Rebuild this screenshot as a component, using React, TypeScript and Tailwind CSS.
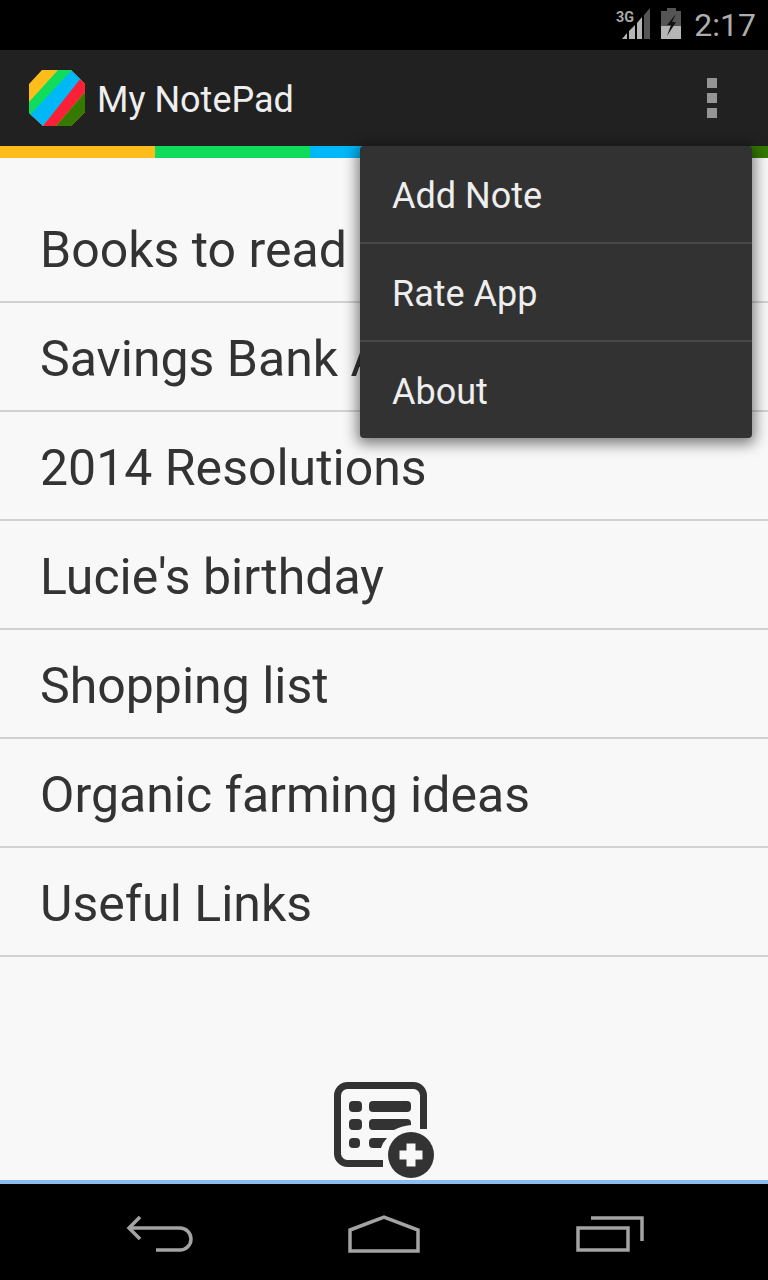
const notes = ["Books to read", "Savings Bank Account", "2014 Resolutions", "Lucie's birthday", "Shopping list", "Organic farming ideas", "Useful Links"];

function Logo() {
  return (
    <svg width="56" height="56" viewBox="0 0 56 56">
      <defs>
        <clipPath id="octa"><polygon points="13,0 42,0 56,14 56,42 42,56 14,56 0,43 0,14" /></clipPath>
      </defs>
      <g clipPath="url(#octa)">
        <rect width="56" height="56" fill="#fdbd1b" />
        <polygon points="29,0 43,0 4,48 0,43 0,32" fill="#10dc5c" />
        <polygon points="43,0 56,0 56,8 14,56 0,56 0,46" fill="#00b8f8" />
        <polygon points="52,8 56,12 56,22 27,56 14,56" fill="#fb2037" />
        <polygon points="56,22 56,56 27,56" fill="#347a00" />
      </g>
    </svg>
  );
}

function AddListIcon() {
  return (
    <svg width="100" height="96" viewBox="0 0 100 96">
      <path d="M49 81.5H13.5a10 10 0 0 1-10-10v-58a10 10 0 0 1 10-10h66a10 10 0 0 1 10 10V47" fill="none" stroke="#333" strokeWidth="7" />
      <rect x="15" y="19" width="13" height="11" rx="4" fill="#333" />
      <rect x="15" y="37" width="13" height="11" rx="4" fill="#333" />
      <rect x="15" y="56" width="11" height="10" rx="4" fill="#333" />
      <rect x="35" y="19" width="42" height="11" rx="4" fill="#333" />
      <path d="M39 37h34a4 4 0 0 1 4 4v2q-10 1-17 5H39a4 4 0 0 1-4-4v-3a4 4 0 0 1 4-4z" fill="#333" />
      <path d="M39 56h14q-4 4-6 10h-8a4 4 0 0 1-4-4v-2a4 4 0 0 1 4-4z" fill="#333" />
      <circle cx="77" cy="73" r="23" fill="#333" />
      <path d="M72.5 61.5h9v7h7v9h-7v7h-9v-7h-7v-9h7z" fill="#f8f8f8" />
    </svg>
  );
}

export default function App() {
  return (
    <div className="relative flex h-[1280px] w-[768px] flex-col overflow-hidden bg-[#f8f8f8] font-['Roboto',sans-serif]">
      <div className="flex h-[50px] items-start justify-end bg-black pr-[12px]">
        <svg width="34" height="32" viewBox="0 0 34 32" className="mt-[8px]">
          <polygon points="34,0 34,31 28,31 28,7" fill="#555" />
          <polygon points="26,9 26,31 21,31 21,15" fill="#b5b5b5" />
          <polygon points="19,17 19,31 13,31 13,23" fill="#b5b5b5" />
          <polygon points="11,25 11,31 6,31" fill="#b5b5b5" />
          <text x="0" y="14" fontSize="15" fontWeight="700" fill="#aaa" fontFamily="Roboto" textLength="18" lengthAdjust="spacingAndGlyphs">3G</text>
        </svg>
        <svg width="20" height="32" viewBox="0 0 20 32" className="ml-[11px] mt-[8px]">
          <rect x="6" y="0" width="9" height="3" fill="#555" />
          <rect x="0" y="3" width="20" height="15" fill="#555" />
          <rect x="0" y="18" width="20" height="13" fill="#b5b5b5" />
          <polygon points="15,6 6,17 10,17 6,28 15,14 11,14" fill="#111" />
        </svg>
        <span className="ml-[13px] mt-[6px] text-[32px] leading-[38px] text-[#aeaeae]">2:17</span>
      </div>

      <div className="flex h-[96px] items-center bg-[#212121] pl-[29px] pr-[51px]">
        <Logo />
        <span className="ml-[12px] pt-[4px] text-[36px] text-[#eeeeee]">My NotePad</span>
        <div className="ml-auto flex flex-col gap-[5px]">
          <div className="size-[10px] bg-[#959595]" />
          <div className="size-[10px] bg-[#959595]" />
          <div className="size-[10px] bg-[#959595]" />
        </div>
      </div>

      <div className="flex h-[12px]">
        <div className="w-[155px] bg-[#fdbd1b]" />
        <div className="w-[155px] bg-[#10dc5c]" />
        <div className="w-[153px] bg-[#00b8f8]" />
        <div className="w-[154px] bg-[#fb2037]" />
        <div className="flex-1 bg-[#347a00]" />
      </div>

      <div className="flex-1 pt-[36px]">
        {notes.map((n) => (
          <div key={n} className="flex h-[109px] items-center border-b-2 border-[#d2d2d2] pl-[40px] pt-[6px] text-[50px] text-[#333]">{n}</div>
        ))}
      </div>

      <div className="flex justify-center pb-[2px]"><AddListIcon /></div>
      <div className="h-[4px] bg-[#8cbcec]" />

      <div className="flex h-[96px] items-center bg-black px-[48px] pt-[4px]">
        <div className="flex flex-1 justify-center pl-[2px]">
          <svg width="68" height="36" viewBox="0 0 68 36" fill="none" stroke="#a3a3a3" strokeWidth="3.5">
            <path d="M14 1 3 12l11 11M3 12h51a11 11 0 0 1 0 22H30" />
          </svg>
        </div>
        <div className="flex flex-1 justify-center pl-[4px]">
          <svg width="72" height="38" viewBox="0 0 72 38" fill="none" stroke="#a3a3a3" strokeWidth="3.5">
            <path d="M2 15 36 2l34 13v21H2z" />
          </svg>
        </div>
        <div className="flex flex-1 justify-center pl-[7px]">
          <svg width="68" height="36" viewBox="0 0 68 36" fill="none" stroke="#a3a3a3" strokeWidth="3.5">
            <path d="M2 12h50v22H2zM15 2h51v23" />
          </svg>
        </div>
      </div>

      <div className="absolute left-[360px] top-[146px] w-[392px] rounded-[4px] bg-[#323232] text-[36px] text-[#eeeeee] shadow-[0_3px_14px_3px_rgba(0,0,0,0.5)]">
        <div className="flex h-[98px] items-center border-b-2 border-[#484848] pl-[32px] pt-[4px]">Add Note</div>
        <div className="flex h-[98px] items-center border-b-2 border-[#484848] pl-[32px] pt-[4px]">Rate App</div>
        <div className="flex h-[96px] items-center pl-[32px] pt-[4px]">About</div>
      </div>
    </div>
  );
}
